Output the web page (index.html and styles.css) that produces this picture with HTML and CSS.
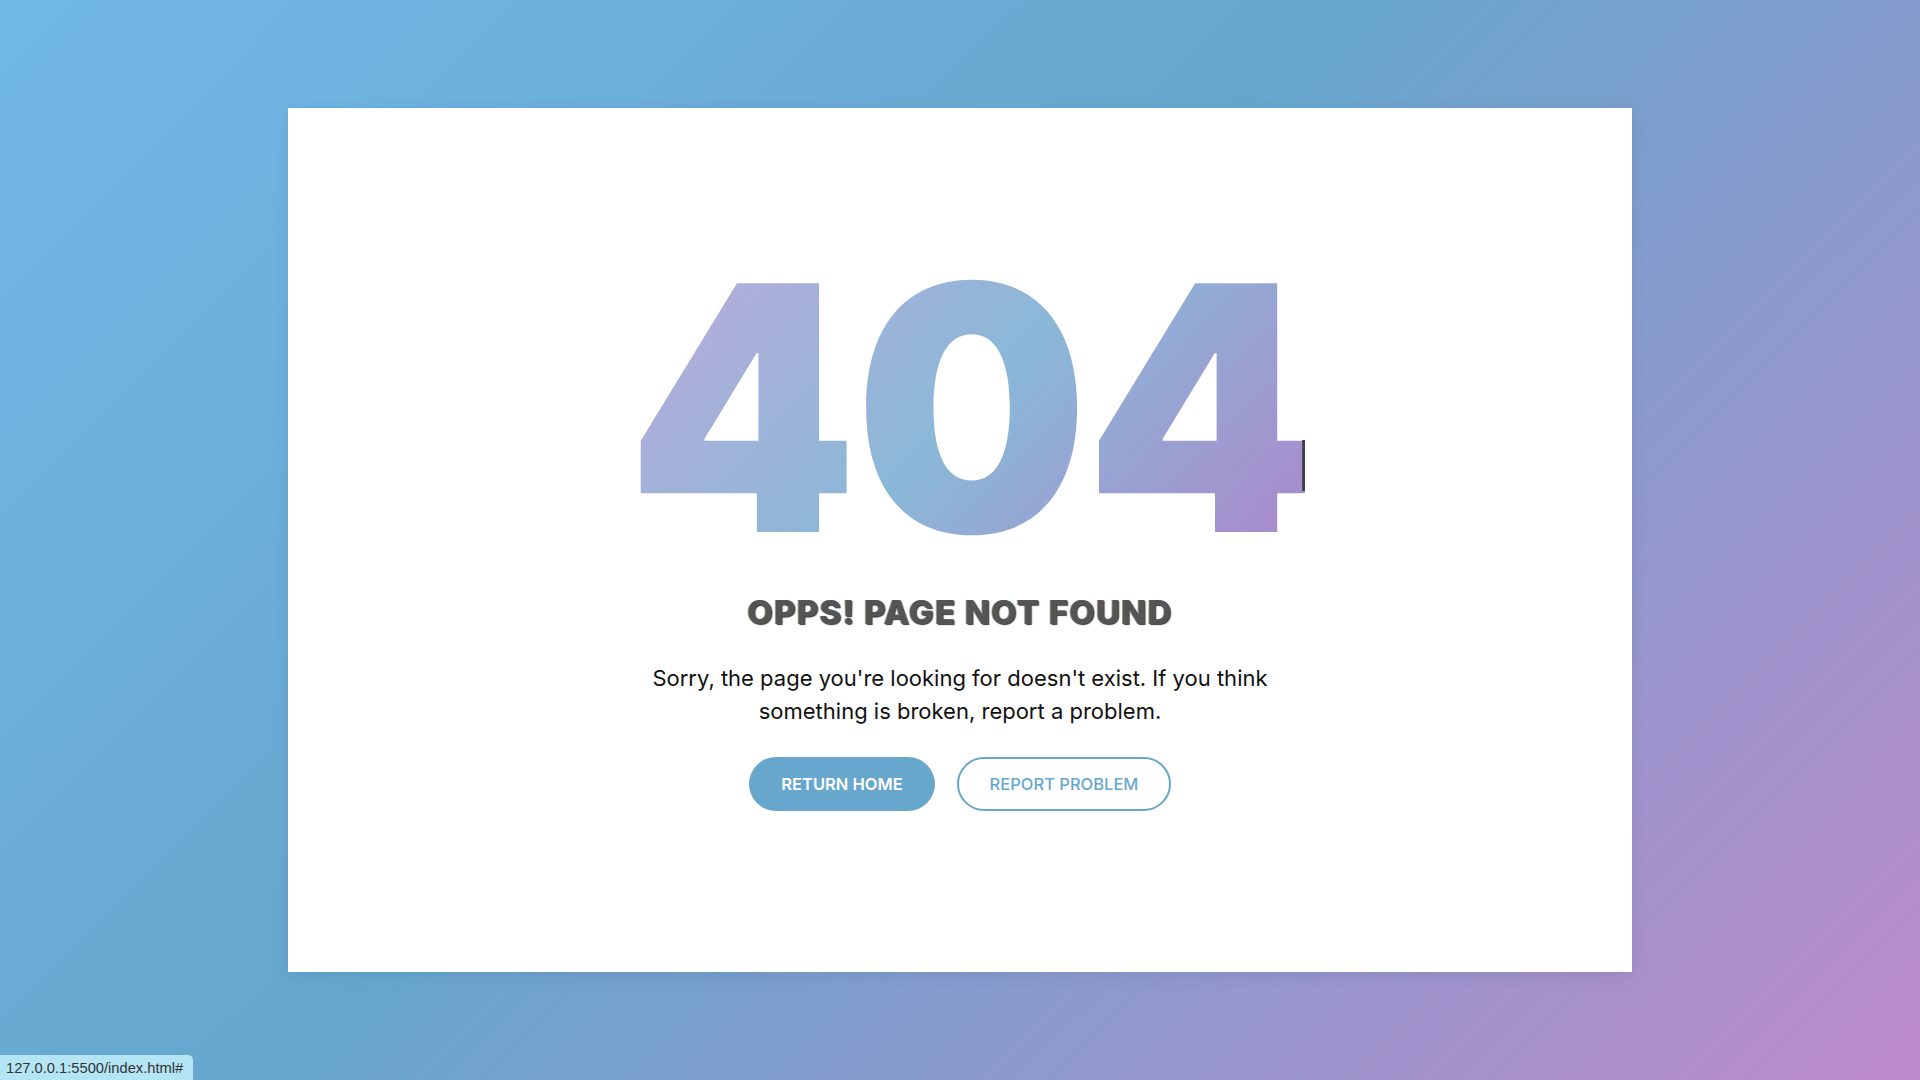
FILE: index.html
```html
<!DOCTYPE html>
<html lang="en">
<head>
<meta charset="utf-8">
<title>404 - Page Not Found</title>
<link rel="stylesheet" href="styles.css">
</head>
<body>
  <main class="page">
    <section class="card">
      <div class="content">
        <h1 class="code"><span class="code-text">404</span></h1>
        <h2 class="title">OPPS! PAGE NOT FOUND</h2>
        <p class="message">Sorry, the page you're looking for doesn't exist. If you think something is broken, report a problem.</p>
        <div class="actions">
          <a href="#" class="btn btn-primary">RETURN HOME</a>
          <a href="#" class="btn btn-outline">REPORT PROBLEM</a>
        </div>
      </div>
    </section>
  </main>
  <div class="status">127.0.0.1:5500/index.html#</div>
</body>
</html>
```
FILE: styles.css
```css
* { box-sizing: border-box; }
html, body { margin: 0; padding: 0; height: 100%; }
body {
  font-family: Inter, "Liberation Sans", sans-serif;
  background: linear-gradient(135deg, #72b8e7 0%, #66a6cd 45%, #bd89cc 100%);
  overflow: hidden;
}
.page {
  height: 100vh;
  display: flex;
  align-items: center;
  justify-content: center;
}
.card {
  width: 1344px;
  height: 864px;
  background: #fff;
  box-shadow: 0 4px 12px rgba(60, 80, 120, 0.12);
  display: flex;
  align-items: center;
  justify-content: center;
}
.content {
  display: flex;
  flex-direction: column;
  align-items: center;
  text-align: center;
  padding-bottom: 11px;
}
.code {
  margin: 0 0 0 20px;
  font-family: Inter, "Liberation Sans", sans-serif;
  font-weight: 900;
  font-size: 342px;
  line-height: 300px;
  letter-spacing: -3px;
  position: relative;
}
.code-text {
  display: inline-block;
  background: linear-gradient(135deg, #bcaad9 0%, #8ab8d8 50%, #ab86ca 100%);
  -webkit-background-clip: text;
  background-clip: text;
  color: transparent;
  position: relative;
  transform: scaleX(0.96);
}
.code-text::after {
  content: "";
  position: absolute;
  right: 8px;
  top: 60.6%;
  width: 3px;
  height: 17.2%;
  background: #3f3f46;
}
.title {
  margin: 32px 0 0;
  font-family: Inter, "Liberation Sans", sans-serif;
  font-weight: 800;
  font-size: 33px;
  line-height: 44px;
  letter-spacing: 1.2px;
  color: #555;
  text-shadow: 1px 1px 1px #3a3a3a, -1px 0 0 #7fb1d6;
}
.message {
  margin: 28px 0 0;
  max-width: 660px;
  font-size: 22px;
  line-height: 33px;
  color: #111;
}
.actions {
  margin-top: 29px;
  display: flex;
  gap: 22px;
}
.btn {
  display: inline-flex;
  align-items: center;
  justify-content: center;
  height: 54px;
  border-radius: 27px;
  font-size: 16.5px;
  text-decoration: none;
}
.btn-primary {
  width: 186px;
  background: #67a6cd;
  color: #fff;
  font-weight: 600;
}
.btn-outline {
  width: 214px;
  border: 2px solid #67a6cd;
  color: #67a6cd;
  font-weight: 500;
}
.status {
  position: fixed;
  left: 0;
  bottom: 0;
  padding: 5px 10px 4px 6px;
  background: #b4e5f4;
  border-top-right-radius: 5px;
  font-family: "Liberation Sans", sans-serif;
  font-size: 14.7px;
  color: #333;
}
```
